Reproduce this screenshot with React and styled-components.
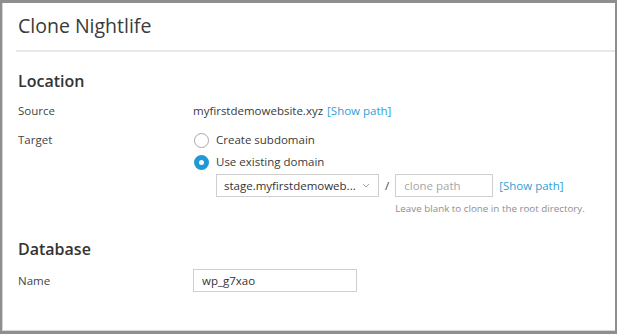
import styled, { createGlobalStyle } from "styled-components";

const GlobalStyle = createGlobalStyle`
  html, body {
    margin: 0;
    padding: 0;
    background: #8e8e8e;
  }
  body {
    font-family: "Open Sans", "Noto Sans", sans-serif;
    color: #3c3c3c;
  }
`;

const Frame = styled.div`
  width: 617px;
  height: 334px;
  box-sizing: border-box;
  padding: 3px 2px 3px 2px;
  background: #8e8e8e;
`;

const Dialog = styled.div`
  height: 100%;
  box-sizing: border-box;
  background: #ffffff;
  border-left: 1px solid #d6d6d6;
  border-bottom: 1px solid #d6d6d6;
  display: flex;
  flex-direction: column;
`;

const Header = styled.div`
  margin-left: 13px;
  height: 49px;
  box-sizing: border-box;
  padding-bottom: 3px;
  border-bottom: 2px solid #e6e8ec;
  display: flex;
  align-items: center;
`;

const Title = styled.h2`
  margin: 0 0 0 2px;
  font-size: 19.5px;
  font-weight: 400;
  color: #3a3a3a;
`;

const Body = styled.div`
  padding: 0 0 0 15px;
`;

const SectionTitle = styled.h3`
  margin: ${(p) => p.$top}px 0 0 0;
  height: 20px;
  line-height: 20px;
  font-size: 16px;
  font-weight: 600;
  color: #333;
`;

const Row = styled.div`
  display: grid;
  grid-template-columns: 175px 1fr;
  margin-top: ${(p) => p.$top}px;
  font-size: 11.5px;
`;

const Label = styled.div`
  height: ${(p) => p.$h || 20}px;
  line-height: ${(p) => p.$h || 20}px;
  color: #444;
`;

const Value = styled.div`
  display: flex;
  flex-direction: column;
  line-height: 20px;
  color: #3a3a3a;
`;

const Link = styled.span`
  color: #2e9fd8;
  margin-left: ${(p) => p.$gap || 4}px;
`;

const RadioRow = styled.label`
  display: flex;
  align-items: center;
  height: 20px;
  margin-bottom: 2px;
  padding-left: 1px;
`;

const RadioDot = styled.span`
  width: 15px;
  height: 15px;
  box-sizing: border-box;
  border-radius: 50%;
  margin-right: 7px;
  border: ${(p) => (p.$on ? "5px solid #1f9ad6" : "1px solid #a8a8a8")};
  background: #fff;
`;

const Nested = styled.div`
  display: flex;
  align-items: flex-start;
  margin: 0 0 0 23px;
`;

const Select = styled.div`
  width: 163px;
  height: 23px;
  box-sizing: border-box;
  border: 1px solid #cfcfcf;
  display: flex;
  align-items: center;
  justify-content: space-between;
  padding: 0 8px 0 7px;
  color: #333;
`;

const Slash = styled.span`
  margin: 0 6px 0 6px;
  line-height: 23px;
  color: #444;
`;

const PathCol = styled.div`
  display: flex;
  flex-direction: column;
`;

const PathLine = styled.div`
  display: flex;
  align-items: center;
`;

const Input = styled.div`
  width: ${(p) => p.$w}px;
  height: 23px;
  box-sizing: border-box;
  border: 1px solid #cfcfcf;
  padding: 0 8px;
  line-height: 21px;
  color: ${(p) => (p.$placeholder ? "#a6a6a6" : "#333")};
`;

const Hint = styled.div`
  margin-top: 5px;
  font-size: 9.8px;
  line-height: 14px;
  color: #8e8e8e;
  white-space: nowrap;
`;

const Chevron = () => (
  <svg width="8" height="5" viewBox="0 0 8 5">
    <path d="M1 1l3 3 3-3" fill="none" stroke="#9a9a9a" strokeWidth="0.9" />
  </svg>
);

export default function App() {
  return (
    <Frame>
      <GlobalStyle />
      <Dialog>
        <Header>
          <Title>Clone Nightlife</Title>
        </Header>
        <Body>
          <SectionTitle $top={19}>Location</SectionTitle>
          <Row $top={10}>
            <Label>Source</Label>
            <Value>
              <span>
                myfirstdemowebsite.xyz<Link>[Show path]</Link>
              </span>
            </Value>
          </Row>
          <Row $top={9}>
            <Label>Target</Label>
            <Value>
              <RadioRow>
                <RadioDot />
                Create subdomain
              </RadioRow>
              <RadioRow>
                <RadioDot $on />
                Use existing domain
              </RadioRow>
              <Nested>
                <Select>
                  <span>stage.myfirstdemoweb...</span>
                  <Chevron />
                </Select>
                <Slash>/</Slash>
                <PathCol>
                  <PathLine>
                    <Input $w={98} $placeholder>
                      clone path
                    </Input>
                    <Link $gap={6}>[Show path]</Link>
                  </PathLine>
                  <Hint>Leave blank to clone in the root directory.</Hint>
                </PathCol>
              </Nested>
            </Value>
          </Row>
          <SectionTitle $top={23}>Database</SectionTitle>
          <Row $top={10}>
            <Label $h={23}>Name</Label>
            <Value>
              <Input $w={164}>wp_g7xao</Input>
            </Value>
          </Row>
        </Body>
      </Dialog>
    </Frame>
  );
}
